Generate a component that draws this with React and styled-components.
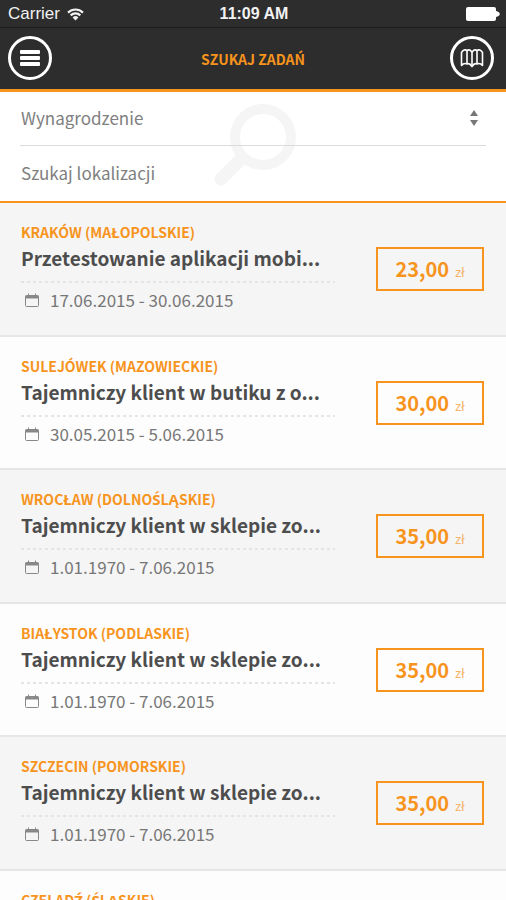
import React from "react";
import styled, { createGlobalStyle } from "styled-components";

const orange = "#f7941d";

const GlobalStyle = createGlobalStyle`
  *, *::before, *::after { box-sizing: border-box; }
  body {
    margin: 0;
    background: #fdfdfd;
    font-family: "Noto Sans CJK SC", "Noto Sans", sans-serif;
    color: #666;
  }
`;

const Screen = styled.div`
  display: flex;
  flex-direction: column;
  height: 100vh;
  overflow: hidden;
`;

const StatusBar = styled.div`
  display: grid;
  grid-template-columns: 1fr auto 1fr;
  align-items: center;
  flex: none;
  height: 28px;
  padding: 0 6px 0 8px;
  background: #2d2d2d;
  border-bottom: 1px solid #1c1c1c;
  color: #f2f2f2;
  font-family: "Liberation Sans", sans-serif;
  font-size: 17px;
  line-height: 28px;
`;

const Carrier = styled.span`
  display: flex;
  align-items: center;
  gap: 7px;
`;

const Clock = styled.time`
  font-size: 16px;
  font-weight: 700;
`;

const BatteryIcon = styled.svg`
  justify-self: end;
`;

const NavBar = styled.header`
  display: flex;
  align-items: center;
  justify-content: space-between;
  flex: none;
  height: 64px;
  padding: 0 12px 1px 8px;
  background: #2d2d2d;
  border-bottom: 3px solid ${orange};
`;

const NavTitle = styled.h1`
  margin: 0;
  padding: 2px 0 0 4px;
  color: ${orange};
  font-size: 14px;
  font-weight: 700;
  line-height: 24px;
`;

const RoundButton = styled.button`
  display: flex;
  align-items: center;
  justify-content: center;
  width: 44px;
  height: 44px;
  padding: 0;
  border: 3px solid #fff;
  border-radius: 50%;
  background: transparent;
  color: #fff;
`;

const Filters = styled.form`
  position: relative;
  flex: none;
  padding: 0 20px;
  background: #fff;
  border-bottom: 2px solid ${orange};
`;

const Watermark = styled.svg`
  position: absolute;
  top: 11px;
  left: calc(50% - 40px);
`;

const Field = styled.label`
  position: relative;
  display: flex;
  align-items: center;
  height: ${(p) => (p.$divided ? "54px" : "55px")};
  border-bottom: ${(p) => (p.$divided ? "1px solid #dcdcdc" : "0")};
  padding: 0 8px 2px 0;
`;

const control = `
  flex: 1;
  min-width: 0;
  height: 40px;
  margin: 0;
  padding: 0 0 0 1px;
  border: 0;
  outline: 0;
  appearance: none;
  background: transparent;
  color: #808080;
  font-family: inherit;
  font-size: 17px;
  font-weight: 400;
`;

const FieldSelect = styled.select`
  ${control}
`;

const FieldInput = styled.input`
  ${control}
  &::placeholder { color: #808080; opacity: 1; }
`;

const TaskList = styled.ul`
  flex: 1;
  min-height: 0;
  margin: 0;
  padding: 0;
  overflow-y: auto;
  scrollbar-width: none;
  list-style: none;
`;

const TaskRow = styled.li`
  display: flex;
  align-items: center;
  justify-content: space-between;
  min-height: 134px;
  padding: 0 22px 0 21px;
  border-bottom: 2px solid #e6e6e6;
  background: #f5f5f5;

  &:nth-child(even) {
    min-height: 133px;
    background: #fdfdfd;
  }
`;

const TaskInfo = styled.div`
  flex: 0 1 314px;
  min-width: 0;
  align-self: flex-start;
  padding-top: 18px;
`;

const Place = styled.div`
  height: 22px;
  color: ${orange};
  font-size: 14px;
  font-weight: 700;
  line-height: 22px;
`;

const Accented = styled.span`
  font-family: "Open Sans", "Noto Sans", sans-serif;
  font-size: 15px;
  line-height: 20px;
`;

const TaskTitle = styled.h2`
  height: 40px;
  margin: 0;
  white-space: nowrap;
  background: repeating-linear-gradient(to right, #e4e4e4 0 3px, transparent 3px 6px) left bottom / 100% 2px no-repeat;
  color: #4d4d4d;
  font-size: 19px;
  font-weight: 700;
  line-height: 30px;
`;

const Dates = styled.div`
  display: flex;
  align-items: center;
  gap: 10px;
  padding: 5px 0 0 3px;
  color: #777;
  font-size: 17px;
  line-height: 24px;
`;

const Price = styled.button`
  display: flex;
  align-items: baseline;
  justify-content: center;
  gap: 6px;
  flex: none;
  width: 108px;
  height: 44px;
  padding: 0;
  border: 2px solid ${orange};
  background: transparent;
  color: ${orange};
  font-family: inherit;
  font-size: 20px;
  font-weight: 700;
  line-height: 40px;
`;

const Currency = styled.span`
  color: #f5b46c;
  font-size: 13px;
  font-weight: 400;
`;

const tasks = [
  { place: "KRAKÓW (MAŁOPOLSKIE)", title: "Przetestowanie aplikacji mobi...", dates: "17.06.2015 - 30.06.2015", price: "23,00" },
  { place: "SULEJÓWEK (MAZOWIECKIE)", title: "Tajemniczy klient w butiku z o...", dates: "30.05.2015 - 5.06.2015", price: "30,00" },
  { place: "WROCŁAW (DOLNOŚLĄSKIE)", title: "Tajemniczy klient w sklepie zo...", dates: "1.01.1970 - 7.06.2015", price: "35,00" },
  { place: "BIAŁYSTOK (PODLASKIE)", title: "Tajemniczy klient w sklepie zo...", dates: "1.01.1970 - 7.06.2015", price: "35,00" },
  { place: "SZCZECIN (POMORSKIE)", title: "Tajemniczy klient w sklepie zo...", dates: "1.01.1970 - 7.06.2015", price: "35,00" },
  { place: "CZELADŹ (ŚLĄSKIE)" },
];

function withAccents(text) {
  return text
    .split(/([ŁĄŚŹ])/)
    .map((part, i) => (i % 2 ? <Accented key={i}>{part}</Accented> : part));
}

function CalendarIcon() {
  return (
    <svg width="16" height="16" viewBox="0 0 16 16" fill="none" stroke="#888" aria-hidden="true">
      <rect x="1.5" y="3.5" width="13" height="11" rx="1" />
      <path d="M1.5 5h13" strokeWidth="3" />
      <path d="M4.5 1.500v3M11.5 1.500v3" />
    </svg>
  );
}

function Task({ place, title, dates, price }) {
  return (
    <TaskRow>
      <TaskInfo>
        <Place>{withAccents(place)}</Place>
        {title && <TaskTitle>{title}</TaskTitle>}
        {dates && (
          <Dates>
            <CalendarIcon />
            <span>{dates}</span>
          </Dates>
        )}
      </TaskInfo>
      {price && (
        <Price type="button">
          {price} <Currency>zł</Currency>
        </Price>
      )}
    </TaskRow>
  );
}

export default function App() {
  return (
    <Screen>
      <GlobalStyle />
      <StatusBar>
        <Carrier>
          Carrier
          <svg width="17" height="13" viewBox="0 0 17 13" fill="none" stroke="#f2f2f2" strokeWidth="2.2" aria-hidden="true">
            <path d="M1 4.6a10.6 10.6 0 0 1 15 0" />
            <path d="M3.7 7.4a6.8 6.8 0 0 1 9.6 0" />
            <path d="M8.5 12.4l-2.900-3a4.100 4.100 0 0 1 5.800 0z" fill="#f2f2f2" stroke="none" />
          </svg>
        </Carrier>
        <Clock>11:09 AM</Clock>
        <BatteryIcon width="34" height="14" viewBox="0 0 34 14" fill="#fff" aria-hidden="true">
          <rect width="30" height="14" rx="2" />
          <path d="M30 4c5 1 5 5 0 6z" />
        </BatteryIcon>
      </StatusBar>
      <NavBar>
        <RoundButton type="button" aria-label="Menu">
          <svg width="20" height="16" viewBox="0 0 20 16" fill="currentColor" aria-hidden="true">
            <rect width="20" height="4" rx="1" />
            <rect y="6" width="20" height="4" rx="1" />
            <rect y="12" width="20" height="4" rx="1" />
          </svg>
        </RoundButton>
        <NavTitle>SZUKAJ ZADAŃ</NavTitle>
        <RoundButton type="button" aria-label="Mapa">
          <svg width="24" height="20" viewBox="0 0 24 20" fill="none" stroke="currentColor" strokeWidth="1.600" strokeLinejoin="round" aria-hidden="true">
            <path d="M1.500 4.500Q4 .5 7 2.500Q10 .5 12 4.500Q14 .5 17 2.500Q20 .5 22.500 4.500V17.500Q20 14.500 17 16Q14.500 14.500 12 18.500Q9.500 14.500 7 16Q4 14.500 1.500 17.500Z" />
            <path d="M7 2.500V16M17 2.500V16M12 4.500v14" />
          </svg>
        </RoundButton>
      </NavBar>
      <Filters>
        <Watermark width="84" height="84" viewBox="0 0 84 84" fill="none" stroke="#f5f5f5" aria-hidden="true">
          <circle cx="50" cy="34" r="28" strokeWidth="10" />
          <path d="M28 56L8 76" strokeWidth="13" strokeLinecap="round" />
        </Watermark>
        <Field $divided>
          <FieldSelect aria-label="Wynagrodzenie" defaultValue="pay">
            <option value="pay">Wynagrodzenie</option>
          </FieldSelect>
          <svg width="8" height="16" viewBox="0 0 8 16" fill="#777" aria-hidden="true">
            <path d="M4 0l4 6H0zM4 16l4-6H0z" />
          </svg>
        </Field>
        <Field>
          <FieldInput type="text" aria-label="Szukaj lokalizacji" placeholder="Szukaj lokalizacji" />
        </Field>
      </Filters>
      <TaskList>
        {tasks.map((task) => (
          <Task key={task.place} {...task} />
        ))}
      </TaskList>
    </Screen>
  );
}
